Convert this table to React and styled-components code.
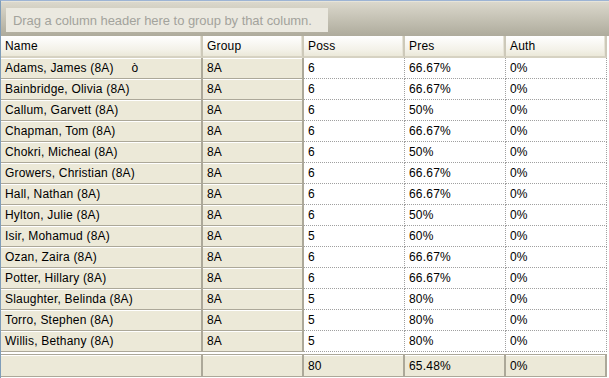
import React from "react"
import styled, { createGlobalStyle } from "styled-components"

const Global = createGlobalStyle`
  html, body { margin: 0; padding: 0; background: #ffffff; }
  body { font-family: "Liberation Sans", Arial, sans-serif; }
`

const Frame = styled.div`
  width: 609px;
  height: 378px;
  box-sizing: border-box;
  border-top: 1px solid #9db4d4;
  border-left: 1px solid #7f9db9;
  background: #ffffff;
  overflow: hidden;
  display: flex;
  flex-direction: column;
`

const GroupPanel = styled.div`
  height: 35px;
  flex-shrink: 0;
  box-sizing: border-box;
  padding: 6px 0 0 5px;
  background: linear-gradient(#dbd8cc, #aeab9c);
  border-top: 1px solid #e6e4da;
`

const GroupBox = styled.div`
  width: 322px;
  height: 24px;
  box-sizing: border-box;
  padding-left: 7px;
  display: flex;
  align-items: center;
  background: #ebe9e0;
  color: #a3a39c;
  font-size: 13px;
  letter-spacing: -0.05px;
`

const Grid = styled.div`
  display: grid;
  grid-template-columns: 202px 101px 101px 101px 101px;
  font-size: 12px;
  letter-spacing: 0.2px;
  color: #000000;
`

const HeadCell = styled.div`
  height: 22px;
  box-sizing: border-box;
  padding-left: 4px;
  display: flex;
  align-items: center;
  background: linear-gradient(#ffffff, #f3f1e8 70%, #ebe8d9);
  border-bottom: 2px solid #d6d2c2;
  border-right: 2px solid #cdc9b9;
  box-shadow: inset -1px 0 0 #e6e3d6;
  &:last-child { border-right: 3px solid #a6a292; }
`

const Cell = styled.div`
  height: 21px;
  box-sizing: border-box;
  padding-left: 4px;
  display: flex;
  align-items: center;
  white-space: pre;
  background: ${p => (p.$label ? "#ece9d8" : "#ffffff")};
  border-bottom: ${p => (p.$label ? "1px solid #aca899" : "1px dotted #a0a0a0")};
  border-right: ${p => (p.$label ? "2px solid #aca899" : "1px dotted #a0a0a0")};
  box-shadow: ${p => (p.$label ? "inset 0 1px 0 #ffffff" : "none")};
`

const Spacer = styled.div`
  grid-column: 1 / -1;
  height: 2px;
  border-bottom: 1px solid #aca899;
  background: #ffffff;
`

const FootCell = styled.div`
  height: 22px;
  box-sizing: border-box;
  padding-left: 4px;
  display: flex;
  align-items: center;
  background: #ece9d8;
  border-right: 2px solid #aca899;
  border-bottom: 1px solid #aca899;
  box-shadow: inset 0 1px 0 #ffffff;
`

const columns = ["Name", "Group", "Poss", "Pres", "Auth"]

const rows = [
  ["Adams, James (8A)     ò", "8A", "6", "66.67%", "0%"],
  ["Bainbridge, Olivia (8A)", "8A", "6", "66.67%", "0%"],
  ["Callum, Garvett (8A)", "8A", "6", "50%", "0%"],
  ["Chapman, Tom (8A)", "8A", "6", "66.67%", "0%"],
  ["Chokri, Micheal (8A)", "8A", "6", "50%", "0%"],
  ["Growers, Christian (8A)", "8A", "6", "66.67%", "0%"],
  ["Hall, Nathan (8A)", "8A", "6", "66.67%", "0%"],
  ["Hylton, Julie (8A)", "8A", "6", "50%", "0%"],
  ["Isir, Mohamud (8A)", "8A", "5", "60%", "0%"],
  ["Ozan, Zaira (8A)", "8A", "6", "66.67%", "0%"],
  ["Potter, Hillary (8A)", "8A", "6", "66.67%", "0%"],
  ["Slaughter, Belinda (8A)", "8A", "5", "80%", "0%"],
  ["Torro, Stephen (8A)", "8A", "5", "80%", "0%"],
  ["Willis, Bethany (8A)", "8A", "5", "80%", "0%"],
]

const totals = ["", "", "80", "65.48%", "0%"]

export default function App() {
  return (
    <Frame>
      <Global />
      <GroupPanel>
        <GroupBox>Drag a column header here to group by that column.</GroupBox>
      </GroupPanel>
      <Grid>
        {columns.map(c => (
          <HeadCell key={c}>{c}</HeadCell>
        ))}
        {rows.map((r, i) =>
          r.map((v, j) => (
            <Cell key={i + "-" + j} $label={j < 2}>
              {v}
            </Cell>
          ))
        )}
        <Spacer />
        {totals.map((v, j) => (
          <FootCell key={"t" + j}>{v}</FootCell>
        ))}
      </Grid>
    </Frame>
  )
}
